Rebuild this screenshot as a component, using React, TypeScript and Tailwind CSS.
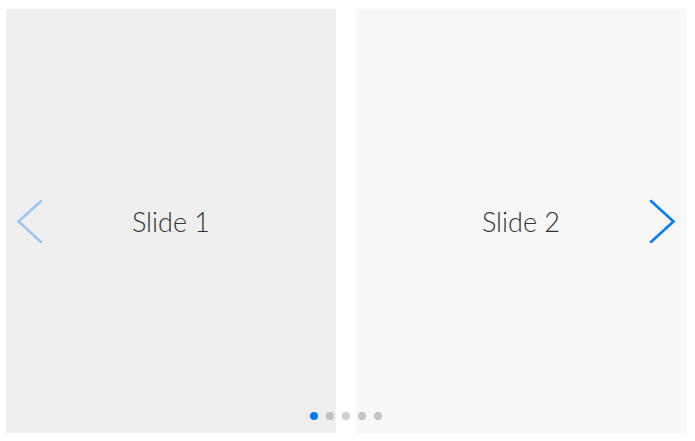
import React from 'react';

const slides = ['Slide 1', 'Slide 2'];

export default function App() {
  return (
    <div className="w-[695px] h-[441px] bg-white pt-[9px] pl-[6px]">
      <div className="relative w-[680px] h-[424px] overflow-hidden flex gap-[20px]">
        {slides.map((s, i) => (
          <div
            key={s}
            className={`w-[330px] h-full shrink-0 flex items-center justify-center ${
              i === 0 ? 'bg-[#efefef]' : 'bg-[#f7f7f7]'
            }`}
          >
            <span className="mt-[2px] text-[27px] font-light text-[#333] font-['Lato','Open_Sans',sans-serif]">{s}</span>
          </div>
        ))}

        {/* prev (disabled) */}
        <svg className="absolute left-[10px] top-[190px] opacity-35" width="27" height="44" viewBox="0 0 27 44">
          <path d="M25 2 L2.5 22.5 L25 43" fill="none" stroke="#007aff" strokeWidth="2.5" strokeLinecap="round" strokeLinejoin="miter" />
        </svg>
        {/* next */}
        <svg className="absolute left-[643px] top-[190px]" width="27" height="44" viewBox="0 0 27 44">
          <path d="M2 2 L24.5 22.5 L2 43" fill="none" stroke="#007aff" strokeWidth="2.5" strokeLinecap="round" strokeLinejoin="miter" />
        </svg>

        {/* pagination */}
        <div className="absolute left-0 right-0 top-[403px] flex justify-center gap-[8px]">
          {[0, 1, 2, 3, 4].map((b) => (
            <span
              key={b}
              className={`w-[8px] h-[8px] rounded-full ${b === 0 ? 'bg-[#007aff]' : 'bg-black/20'}`}
            />
          ))}
        </div>
      </div>
    </div>
  );
}
